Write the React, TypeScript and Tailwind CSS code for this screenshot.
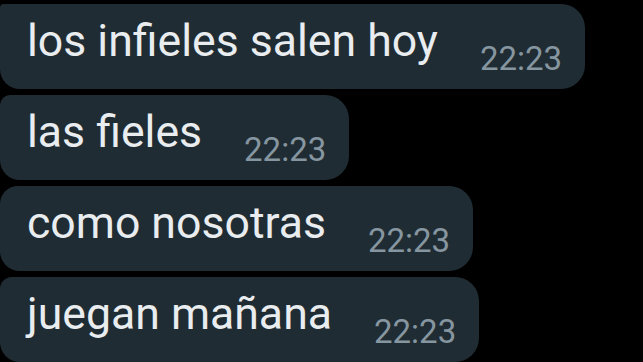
import React from "react";

const msgs = [
  { text: "los infieles salen hoy", time: "22:23", tl: "rounded-tl-[4px]" },
  { text: "las fieles", time: "22:23", tl: "rounded-tl-[10px]" },
  { text: "como nosotras", time: "22:23", tl: "rounded-tl-[18px]" },
  { text: "juegan mañana", time: "22:23", tl: "rounded-tl-[12px]" },
];

export default function App() {
  return (
    <div
      className="w-[643px] h-[362px] bg-black overflow-hidden flex flex-col items-start gap-[6px] pt-[4px]"
      style={{ fontFamily: "Roboto, 'Noto Sans', sans-serif" }}
    >
      {msgs.map((m, i) => (
        <div
          key={i}
          className={`shrink-0 h-[85px] flex items-start bg-[#202c33] pl-[27px] pr-[23px] rounded-tr-[24px] rounded-br-[24px] rounded-bl-[20px] ${m.tl}`}
        >
          <span className="text-[44.6px] leading-[52px] mt-[11px] text-[#e9edef] whitespace-nowrap">
            {m.text}
          </span>
          <span className="ml-[42px] text-[33px] leading-[33px] mt-[38px] text-[#8696a0] whitespace-nowrap">
            {m.time}
          </span>
        </div>
      ))}
    </div>
  );
}
